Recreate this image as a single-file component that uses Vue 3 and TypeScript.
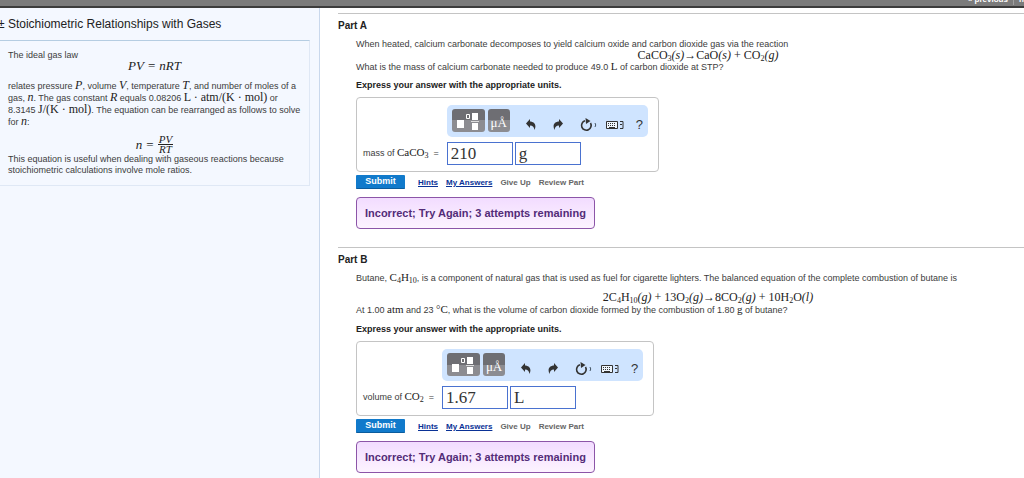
<script setup lang="ts">
import { ref } from 'vue'

type Style = 'up' | 'it' | 'sub' | 'op' | 'deg'
type Token = [Style, string]
interface Answer {
  id: string
  label: string
  formula: Token[]
  value: string
  unit: string
}
interface Part {
  name: string
  cls: string
  intro: (string | Token[])[]
  equation: Token[]
  question: (string | Token[])[]
  answer: Answer
}

const parts = ref<Part[]>([
  {
    name: 'Part A',
    cls: 'first',
    intro: ['When heated, calcium carbonate decomposes to yield calcium oxide and carbon dioxide gas via the reaction'],
    equation: [
      ['up', 'CaCO'], ['sub', '3'], ['it', '(s)'], ['up', '→CaO'], ['it', '(s)'], ['op', '+'],
      ['up', 'CO'], ['sub', '2'], ['it', '(g)'],
    ],
    question: ['What is the mass of calcium carbonate needed to produce 49.0 ', [['up', 'L']], ' of carbon dioxide at STP?'],
    answer: { id: 'a', label: 'mass of', formula: [['up', 'CaCO'], ['sub', '3']], value: '210', unit: 'g' },
  },
  {
    name: 'Part B',
    cls: 'second',
    intro: [
      'Butane, ', [['up', 'C'], ['sub', '4'], ['up', 'H'], ['sub', '10']],
      ', is a component of natural gas that is used as fuel for cigarette lighters. The balanced equation of the complete combustion of butane is',
    ],
    equation: [
      ['up', '2C'], ['sub', '4'], ['up', 'H'], ['sub', '10'], ['it', '(g)'], ['op', '+'],
      ['up', '13O'], ['sub', '2'], ['it', '(g)'], ['up', '→8CO'], ['sub', '2'], ['it', '(g)'], ['op', '+'],
      ['up', '10H'], ['sub', '2'], ['up', 'O'], ['it', '(l)'],
    ],
    question: [
      'At 1.00 ', [['up', 'atm']], ' and 23 ', [['deg', '°'], ['up', 'C']],
      ', what is the volume of carbon dioxide formed by the combustion of 1.80 ', [['up', 'g']], ' of butane?',
    ],
    answer: { id: 'b', label: 'volume of', formula: [['up', 'CO'], ['sub', '2']], value: '1.67', unit: 'L' },
  },
])
</script>

<template>
  <div class="page">
    <header class="bar">
      <nav class="pager">
        <a href="#">« previous</a>
        <span class="sep"></span>
        <a href="#">next »</a>
      </nav>
    </header>
    <div class="columns">
      <aside class="side">
        <h1>± Stoichiometric Relationships with Gases</h1>
        <section class="notes">
          <p>The ideal gas law</p>
          <div class="display law"><i>PV</i><span class="op">=</span><i>nRT</i></div>
          <p class="terms">
            relates pressure <i class="m">P</i>, volume <i class="m">V</i>, temperature <i class="m">T</i>, and number of moles of a<br />
            gas, <i class="m">n</i>. The gas constant <i class="m">R</i> equals 0.08206 <span class="m">L · atm/(K · mol)</span> or<br />
            8.3145 <span class="m">J/(K · mol)</span>. The equation can be rearranged as follows to solve<br />
            for <i class="m">n</i>:
          </p>
          <div class="display solved">
            <i>n</i><span class="op">=</span>
            <span class="frac"><i class="num">PV</i><i>RT</i></span>
          </div>
          <p>This equation is useful when dealing with gaseous reactions because<br />stoichiometric calculations involve mole ratios.</p>
        </section>
      </aside>

      <main class="work">
        <section v-for="part in parts" :key="part.name" class="part" :class="part.cls">
          <h2>{{ part.name }}</h2>
          <div class="body">
            <p class="intro">
              <template v-for="(piece, i) in part.intro" :key="i">
                <template v-if="typeof piece === 'string'">{{ piece }}</template>
                <span v-else class="m"><span v-for="(t, k) in piece" :key="k" :class="t[0]">{{ t[1] }}</span></span>
              </template>
            </p>
            <div class="equation"><span v-for="(t, k) in part.equation" :key="k" :class="t[0]">{{ t[1] }}</span></div>
            <p class="question">
              <template v-for="(piece, i) in part.question" :key="i">
                <template v-if="typeof piece === 'string'">{{ piece }}</template>
                <span v-else class="m"><span v-for="(t, k) in piece" :key="k" :class="t[0]">{{ t[1] }}</span></span>
              </template>
            </p>
            <p class="express">Express your answer with the appropriate units.</p>

            <form :id="'form-' + part.answer.id" class="answer" @submit.prevent>
              <div class="tools">
                <button type="button" class="dark wide" aria-label="Templates">
                  <svg width="33" height="23" viewBox="0 0 33 23">
                    <path d="M5 11h7v8H5zM20 4h6v7h-6zM20 14h6v7h-6z" fill="#fff" />
                    <path d="M19 12.500h8" stroke="#ddd" />
                    <path d="M14.500 5.500h3v4h-3z" fill="none" stroke="#fff" />
                  </svg>
                </button>
                <button type="button" class="dark">μÅ</button>
                <button type="button" class="flat undo" aria-label="Undo">
                  <svg width="10" height="11" viewBox="0 0 10 11"><path d="M4 0v2.500C8 2.700 11 5.500 8.500 11 8 8 7 6.500 4 6.500V9L0 4.500z" fill="#333" /></svg>
                </button>
                <button type="button" class="flat redo" aria-label="Redo">
                  <svg width="10" height="11" viewBox="0 0 10 11"><path d="M6 0v2.500C2 2.700 -1 5.500 1.500 11 2 8 3 6.500 6 6.500V9l4-4.500z" fill="#333" /></svg>
                </button>
                <button type="button" class="flat reset" aria-label="Reset">
                  <svg width="18" height="14" viewBox="0 0 18 14">
                    <path d="M5 2.800A4.800 4.800 0 1 0 10.500 5" fill="none" stroke="#333" stroke-width="1.600" />
                    <path d="M5.500 0L10.500 3 6 6z" fill="#333" />
                    <path d="M15 5q1.500 2 0 4" fill="none" stroke="#456" />
                  </svg>
                </button>
                <button type="button" class="flat keys" aria-label="Keyboard">
                  <svg width="19" height="10" viewBox="0 0 19 10">
                    <path d="M.5 1.500h11v7H.5z" fill="#eef5fc" stroke="#333" />
                    <path d="M2 3.500h8M2 5.500h8" stroke="#333" stroke-dasharray="1 1" />
                    <path d="M3 7.500h6M14 1.500h3v7h-3M14 4.500h2" fill="none" stroke="#333" />
                  </svg>
                </button>
                <button type="button" class="flat help" aria-label="Help">?</button>
              </div>
              <label :for="part.answer.id">{{ part.answer.label }} <span class="m"><span v-for="(t, k) in part.answer.formula" :key="k" :class="t[0]">{{ t[1] }}</span></span>&nbsp; =</label>
              <div class="fields">
                <input :id="part.answer.id" v-model="part.answer.value" type="text" />
                <input v-model="part.answer.unit" type="text" aria-label="Units" />
              </div>
            </form>

            <div class="actions">
              <button type="submit" :form="'form-' + part.answer.id" class="submit">Submit</button>
              <a href="#">Hints</a>
              <a href="#">My Answers</a>
              <button type="button" class="off" disabled>Give Up</button>
              <button type="button" class="off" disabled>Review Part</button>
            </div>
            <div class="feedback" role="status">Incorrect; Try Again; 3 attempts remaining</div>
          </div>
        </section>
      </main>
    </div>
  </div>
</template>

<style>
body {
  margin: 0;
  overflow-x: hidden;
  background: #fff;
}
</style>

<style scoped>
.page {
  min-height: 100vh;
  display: flex;
  flex-direction: column;
  font: 9px/11px "Liberation Sans", Arial, sans-serif;
  color: #3c3c3c;
}
h1, h2, p {
  margin: 0;
}
button {
  font-family: inherit;
  padding: 0;
  border: 0;
}
.bar {
  box-sizing: border-box;
  height: 8px;
  background: #7b7b7b;
  border-bottom: 2px solid #3c3c3c;
  overflow: hidden;
}
.pager {
  display: flex;
  justify-content: flex-end;
  gap: 5px;
  margin: -6px -18px 0 0;
}
.pager a {
  color: #fff;
  font-weight: bold;
  font-size: 8px;
  text-decoration: none;
}
.sep {
  border-left: 1px solid #a0a0a0;
}
.columns {
  flex: 1;
  display: grid;
  grid-template-columns: 320px minmax(0, 1fr);
}
.side {
  background: #f4f8ff;
  border-right: 1px solid #c9d8ec;
}
h1 {
  margin: 9px 0 8px -2px;
  font-size: 12px;
  line-height: 15px;
  font-weight: normal;
  color: #222;
  white-space: nowrap;
}
.notes {
  margin-right: 9px;
  padding: 9px 0 9px 8px;
  border: solid #dfe8f5;
  border-width: 1px 1px 1px 0;
  border-top-color: #b5cde2;
  white-space: nowrap;
}
.m, .display, .equation {
  font-family: "Liberation Serif", "Times New Roman", serif;
  color: #222;
}
.m {
  font-size: 11px;
  line-height: 0;
}
.terms {
  line-height: 12px;
}
.terms .m {
  font-size: 12px;
}
.display {
  display: flex;
  align-items: center;
  justify-content: center;
  margin-left: -8px;
  font-size: 13px;
}
.law {
  line-height: 10px;
  margin-bottom: 9px;
}
.solved {
  margin-top: 7px;
  line-height: 9px;
}
.display .op {
  margin: 0 4px;
}
.op {
  margin: 0 3px;
}
.frac {
  display: inline-flex;
  flex-direction: column;
  align-items: center;
  font-size: 11px;
}
.num {
  border-bottom: 1px solid #222;
  padding: 0 1px;
}
.sub {
  font-size: 8px;
  line-height: 0;
  vertical-align: -2px;
}
.it {
  font-style: italic;
}
.work {
  padding-left: 18px;
}
.part {
  border-top: 1px solid #c4c4c4;
}
.first {
  margin-top: 5px;
}
.second {
  margin-top: 18px;
}
h2 {
  margin-top: 6px;
  font-size: 10px;
  line-height: 12px;
  color: #222;
}
.body {
  padding-left: 18px;
  white-space: nowrap;
}
.intro {
  margin-top: 7px;
}
.equation {
  margin-right: -36px;
  margin-bottom: 2px;
  text-align: center;
  font-size: 12px;
  line-height: 10px;
}
.second .equation {
  margin-top: 8px;
  margin-bottom: 3px;
}
.express {
  margin-top: 7px;
  font-weight: bold;
  color: #222;
}
.second .express {
  margin-top: 8px;
}
.answer {
  display: grid;
  width: fit-content;
  grid-template-columns: auto auto;
  column-gap: 8px;
  row-gap: 5px;
  align-items: center;
  margin-top: 6px;
  padding: 7px 10px 6px 6px;
  border: 1px solid #c4c4c4;
  border-radius: 4px;
}
.tools {
  grid-column: 2;
  box-sizing: border-box;
  display: flex;
  align-items: center;
  width: 201px;
  height: 32px;
  padding: 0 5px;
  border-radius: 5px;
  background: #cfe4ff;
}
.dark {
  width: 22px;
  height: 23px;
  margin: -1px 3px 0 0;
  border-radius: 3px;
  background: linear-gradient(#6e6e73 50%, #8c8c91 50%);
  color: #fff;
  font: 13px/27px "Liberation Serif", "Times New Roman", serif;
  flex: none;
}
.wide {
  width: 33px;
}
.dark svg, .flat svg {
  display: block;
}
.flat {
  display: flex;
  flex: none;
  background: none;
  color: #333;
  margin-top: 7px;
}
.undo {
  margin-left: 13px;
}
.redo {
  margin-left: 17px;
}
.reset {
  margin-left: 17px;
}
.keys {
  margin-left: 8px;
}
.help {
  margin-left: 11px;
  font-size: 13px;
  line-height: 13px;
}
.fields {
  display: flex;
  gap: 2px;
}
input {
  box-sizing: border-box;
  width: 66px;
  height: 23px;
  padding: 0 3px;
  border: 1px solid #4a72d0;
  background: #fff;
  color: #333;
  font: 17px/21px "Liberation Serif", "Times New Roman", serif;
}
.actions {
  display: flex;
  align-items: center;
  margin-top: 3px;
  font-size: 8px;
  font-weight: bold;
}
.submit {
  width: 49px;
  height: 14px;
  margin-right: 13px;
  border-radius: 1px;
  background: #117acb;
  border-bottom: 1px solid #0b5c9d;
  color: #fff;
  font-size: 9px;
  line-height: 13px;
  font-weight: bold;
}
.actions a {
  margin-right: 8px;
  color: #0a3296;
  line-height: 9px;
}
.off {
  margin-right: 8px;
  background: none;
  color: #666;
  font-size: 8px;
  font-weight: bold;
}
.feedback {
  width: fit-content;
  margin-top: 8px;
  padding: 0 8px;
  border: 1px solid #8c55a8;
  border-radius: 4px;
  background: linear-gradient(#f2dcff, #fdf3ff);
  color: #532c78;
  font-size: 11px;
  line-height: 30px;
  font-weight: bold;
}
</style>
